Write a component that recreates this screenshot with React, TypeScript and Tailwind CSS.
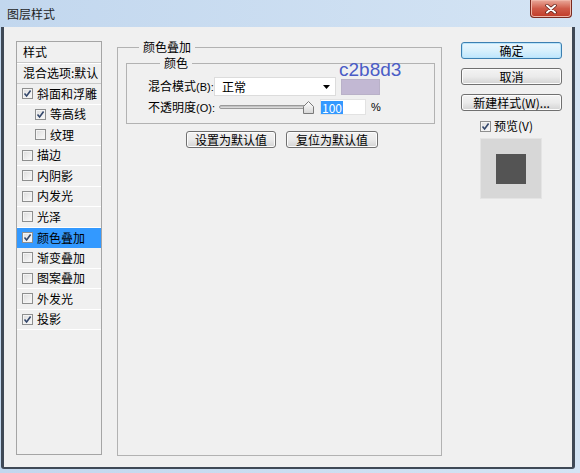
import React from "react";

type Effect = { label: string; checked?: boolean; indent?: boolean; active?: boolean };

const effects: Effect[] = [
  { label: "斜面和浮雕", checked: true },
  { label: "等高线", checked: true, indent: true },
  { label: "纹理", indent: true },
  { label: "描边" },
  { label: "内阴影" },
  { label: "内发光" },
  { label: "光泽" },
  { label: "颜色叠加", checked: true, active: true },
  { label: "渐变叠加" },
  { label: "图案叠加" },
  { label: "外发光" },
  { label: "投影", checked: true },
];

function CheckBox({ checked = false }: { checked?: boolean }) {
  return (
    <span className="w-[11px] h-[11px] shrink-0 border border-[#8e8f8f] bg-linear-to-br from-[#dcdcdc] to-[#fbfbfb] shadow-[inset_0_0_0_1px_#f4f4f4] flex items-center justify-center">
      {checked && (
        <svg width="9" height="9" viewBox="0 0 9 9">
          <path d="M1.5 4.5 L3.6 7 L7.6 1.5" fill="none" stroke="#33476b" strokeWidth="1.6" />
        </svg>
      )}
    </span>
  );
}

function WinButton({ children, primary = false, className = "" }: { children: React.ReactNode; primary?: boolean; className?: string }) {
  return (
    <button
      className={
        (primary
          ? "border-[#3c7fb1] bg-linear-to-b from-[#eaf6fd] via-[#d9f0fc] to-[#bee6fd] shadow-[inset_0_0_0_1px_#b9e4fa] "
          : "border-[#707070] bg-linear-to-b from-[#f3f3f3] via-[#ebebeb] to-[#d3d3d3] shadow-[inset_0_0_0_1px_#fcfcfc] ") +
        "h-[17px] border rounded-[3px] text-[12px] leading-none text-black flex items-center justify-center " +
        className
      }
    >
      {children}
    </button>
  );
}

// 标签里的快捷键部分用窄一点的西文字体
function Label({ text, hotkey, width }: { text: string; hotkey: string; width: string }) {
  return (
    <span className={width + " shrink-0 whitespace-nowrap"}>
      {text}
      <span className="font-['Liberation_Sans',sans-serif] text-[11px]">({hotkey}):</span>
    </span>
  );
}

export default function App() {
  return (
    <div className="w-[580px] h-[473px] bg-linear-to-r from-[#c2d7ee] to-[#d4e4f4] overflow-hidden font-['Noto_Sans_CJK_SC',sans-serif] text-[12px] text-black relative">
      {/* 标题栏 */}
      <div className="h-[27px] flex items-center pl-[7px] relative">
        <span className="text-[12px] text-[#1e1e1e] leading-none mt-[1px]">图层样式</span>
        <div className="absolute top-0 right-[8px] w-[42px] h-[18px] rounded-b-[4px] border border-t-0 border-[#7a2a20] bg-linear-to-b from-[#e9a99b] via-[#cf5b49] to-[#c03a27] flex items-center justify-center shadow-[inset_0_0_0_1px_#f0b6a8]">
          <svg width="12" height="10" viewBox="0 0 12 10">
            <path d="M2 1.5 L10 8.5 M10 1.5 L2 8.5" stroke="#5a1a12" strokeWidth="3.4" strokeLinecap="round" />
            <path d="M2 1.5 L10 8.5 M10 1.5 L2 8.5" stroke="#ffffff" strokeWidth="2" strokeLinecap="round" />
          </svg>
        </div>
      </div>

      {/* 客户区 */}
      <div className="ml-[1px] mr-[5px] h-[442px] border-l-[3px] border-r-[3px] border-b-[2px] border-[#3f4956] rounded-b-[3px] bg-[#f0f0f0] relative">
        <div className="flex items-start pt-[14px] pl-[12px]">
          {/* 样式列表 */}
          <div className="w-[86px] h-[414px] border border-[#a5a5a5] bg-[#f0f0f0] overflow-hidden">
            <div className="h-[21px] flex items-center pl-[6px] border-b border-[#c9c9c9] shadow-[0_1px_0_#fff]">样式</div>
            <div className="h-[21px] flex items-center pl-[6px] border-b border-[#c9c9c9] whitespace-nowrap">混合选项:默认</div>
            {effects.map((e) => (
              <div
                key={e.label}
                className={
                  (e.active ? "bg-[#3399ff] " : "border-b border-white ") +
                  (e.indent ? "pl-[18px] " : "pl-[5px] ") +
                  "h-[20.5px] flex items-center gap-[4px] whitespace-nowrap"
                }
              >
                <CheckBox checked={e.checked} />
                <span>{e.label}</span>
              </div>
            ))}
          </div>

          {/* 颜色叠加 */}
          <fieldset className="ml-[15px] mt-[-2px] w-[325px] h-[417px] border border-[#b2b2b2] pl-[8px]">
            <legend className="ml-[13px] px-[4px] leading-[16px]">颜色叠加</legend>
            <fieldset className="w-[309px] h-[69px] border border-[#b2b2b2] pl-[21px]">
              <legend className="ml-[12px] px-[4px] leading-[16px]">颜色</legend>
              <div className="flex items-center mt-[6px] h-[19px]">
                <Label text="混合模式" hotkey="B" width="w-[66px]" />
                <div className="w-[122px] h-[19px] bg-white border border-[#dcdcdc] flex items-center justify-between pl-[7px] pr-[5px]">
                  <span>正常</span>
                  <svg width="7" height="4" viewBox="0 0 7 4">
                    <path d="M0 0 L7 0 L3.5 4 Z" fill="#000" />
                  </svg>
                </div>
                <div className="ml-[5px] w-[39px] h-[16px] bg-[#c2b8d3] border border-[#b9b1c8]" />
              </div>
              <div className="flex items-center mt-[3px] h-[16px]">
                <Label text="不透明度" hotkey="O" width="w-[71px]" />
                <div className="w-[96px] h-[16px] relative flex items-center">
                  <div className="w-[91px] h-[4px] rounded-full border border-[#9a9a9a] bg-linear-to-b from-[#b8b8b8] to-[#e6e6e6]" />
                  <svg className="absolute right-[1px] top-[2px]" width="11" height="13" viewBox="0 0 11 13">
                    <defs>
                      <linearGradient id="thumb" x1="0" y1="0" x2="0" y2="1">
                        <stop offset="0" stopColor="#ffffff" />
                        <stop offset="1" stopColor="#d6d6d6" />
                      </linearGradient>
                    </defs>
                    <path d="M5.5 0.5 L10.5 5.5 L10.5 12.5 L0.5 12.5 L0.5 5.5 Z" fill="url(#thumb)" stroke="#7a7a7a" />
                  </svg>
                </div>
                <div className="ml-[5px] w-[46px] h-[16px] bg-white border border-[#e2e2e2] flex items-center">
                  <span className="bg-[#3399ff] text-white leading-[13px] px-[1px]">100</span>
                </div>
                <span className="ml-[5px] font-['Liberation_Sans',sans-serif] text-[11px]">%</span>
              </div>
            </fieldset>
            <div className="flex mt-[7px] ml-[60px] gap-[10px]">
              <WinButton className="w-[90px]">设置为默认值</WinButton>
              <WinButton className="w-[92px]">复位为默认值</WinButton>
            </div>
          </fieldset>

          {/* 右侧按钮 */}
          <div className="ml-[19px] mt-[1px] w-[101px] flex flex-col">
            <WinButton primary className="w-[101px] h-[16px]">确定</WinButton>
            <WinButton className="w-[101px] mt-[9px]">取消</WinButton>
            <WinButton className="w-[101px] mt-[9px]">新建样式(W)...</WinButton>
            <div className="flex items-center gap-[3px] pl-[19px] mt-[8px] h-[14px]">
              <CheckBox checked />
              <span>预览(V)</span>
            </div>
            <div className="ml-[19px] mt-[5px] w-[62px] h-[61px] bg-[#d7d7d7] border border-[#e4e4e4] flex items-center justify-center">
              <div className="w-[30px] h-[30px] bg-[#545454]" />
            </div>
          </div>
        </div>

        {/* 色值标注 */}
        <span className="absolute left-[335px] top-[33px] font-['Liberation_Sans',sans-serif] text-[19px] leading-none text-[#4a5cc6]">
          c2b8d3
        </span>
      </div>
    </div>
  );
}
